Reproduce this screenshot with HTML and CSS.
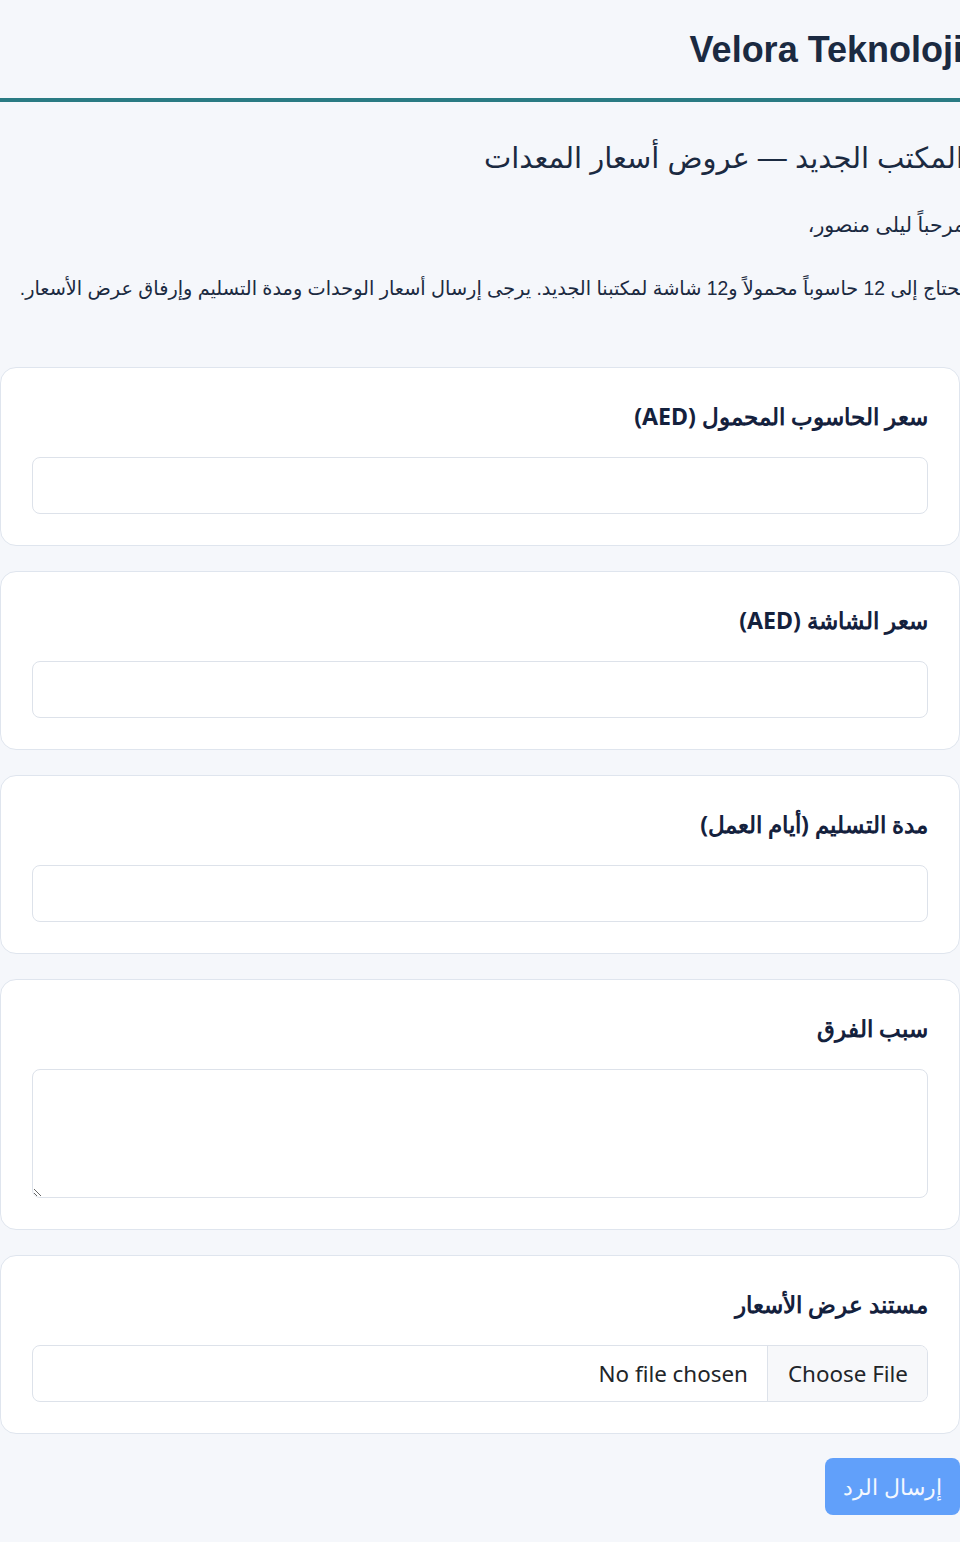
FILE: index.html
```html
<!DOCTYPE html>
<html lang="ar" dir="rtl">
<head>
<meta charset="utf-8">
<title>Velora Teknoloji</title>
<link rel="stylesheet" href="styles.css">
</head>
<body>
<header class="site-header">
  <h1 class="brand">Velora Teknoloji</h1>
</header>
<main class="page">
  <h2 class="title">المكتب الجديد — عروض أسعار المعدات</h2>
  <p class="greeting">مرحباً ليلى منصور،</p>
  <p class="intro">نحتاج إلى 12 حاسوباً محمولاً و12 شاشة لمكتبنا الجديد. يرجى إرسال أسعار الوحدات ومدة التسليم وإرفاق عرض الأسعار.</p>

  <form class="form">
    <div class="card">
      <label class="label" for="f1">سعر الحاسوب المحمول (AED)</label>
      <input class="control" id="f1" type="text">
    </div>
    <div class="card">
      <label class="label" for="f2">سعر الشاشة (AED)</label>
      <input class="control" id="f2" type="text">
    </div>
    <div class="card">
      <label class="label" for="f3">مدة التسليم (أيام العمل)</label>
      <input class="control" id="f3" type="text">
    </div>
    <div class="card">
      <label class="label" for="f4">سبب الفرق</label>
      <textarea class="control area" id="f4"></textarea>
    </div>
    <div class="card">
      <label class="label" for="f5">مستند عرض الأسعار</label>
      <input class="control file" id="f5" type="file">
    </div>
    <div class="actions">
      <button class="submit" type="button">إرسال الرد</button>
    </div>
  </form>
</main>
</body>
</html>
```

FILE: styles.css
```css
html, body {
  margin: 0;
  padding: 0;
  overflow-x: hidden;
}
body {
  background: #f5f7fb;
  color: #1b2a41;
  font-family: "Liberation Sans", "DejaVu Sans", sans-serif;
}
.site-header {
  padding: 29px 0 28px;
  border-bottom: 4px solid #2a7b83;
}
.brand {
  margin: 0 -3px 0 0;
  font-size: 36px;
  line-height: 41px;
  font-weight: 700;
  color: #1b2a41;
}
.page {
  padding: 39px 0 26px;
}
.title {
  margin: 0 -4px 0 0;
  font-size: 29px;
  line-height: 34px;
  font-weight: 400;
  color: #1b2a41;
}
.greeting {
  margin: 37px -5px 0 0;
  font-size: 20.5px;
  line-height: 26px;
}
.intro {
  margin: 38px -5px 0 0;
  font-size: 19.3px;
  line-height: 26px;
}
.form {
  margin-top: 65px;
  display: flex;
  flex-direction: column;
  gap: 25px;
  font-family: "Noto Sans", "Open Sans", sans-serif;
}
.card {
  background: #ffffff;
  border: 1px solid #dfe5ee;
  border-radius: 16px;
  padding: 31px;
  display: flex;
  flex-direction: column;
}
.label {
  font-size: 23.2px;
  line-height: 35px;
  font-weight: 700;
  color: #14213d;
  margin-bottom: 23px;
}
.control {
  box-sizing: border-box;
  height: 57px;
  width: 100%;
  margin: 0;
  padding: 11px 16px;
  border: 1px solid #dde2ea;
  border-radius: 8px;
  background: #ffffff;
  font-family: "Noto Sans", "Open Sans", sans-serif;
  font-size: 22.4px;
  line-height: 33px;
  color: #212529;
}
.area {
  height: 129px;
  resize: vertical;
}
.file {
  padding: 0;
  overflow: hidden;
}
.file::file-selector-button {
  height: 55px;
  margin: 0 0 0 19px;
  padding: 0 19px 0 20px;
  border: 0;
  border-left: 1px solid #dde2ea;
  border-radius: 0;
  background: #f7f8fa;
  font-family: "Noto Sans", "Open Sans", sans-serif;
  font-size: 22.4px;
  color: #212529;
}
.actions {
  display: flex;
  justify-content: flex-start;
  margin-top: -1px;
}
.submit {
  height: 57px;
  width: 135px;
  margin-right: 0;
  border: 0;
  border-radius: 8px;
  background: #61a0fa;
  color: #f4f8ff;
  font-family: "Noto Sans", "Open Sans", sans-serif;
  font-size: 22.4px;
  padding: 0;
}
```
